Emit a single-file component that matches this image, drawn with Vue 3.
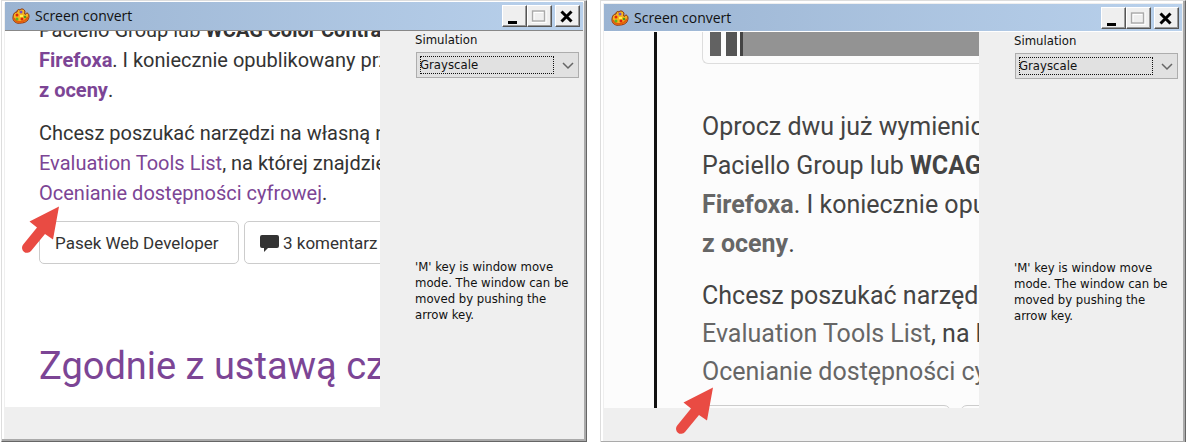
<script setup>
import { ref } from 'vue'

const windows = [
  { id: 'colour', gray: false },
  { id: 'gray', gray: true },
]
const modes = ref({ colour: 'Grayscale', gray: 'Grayscale' })
</script>

<template>
  <main class="desk">
    <section v-for="win in windows" :key="win.id" class="window" :class="win.id">
      <header class="titlebar">
        <svg class="palette" width="18" height="18" viewBox="0 0 18 18" aria-hidden="true">
          <path d="M8 3C6 2 5 3 5 5C2 5 1 8 1 11C1 15 5 17 9 16C14 16 17 13 17 9C17 6 14 5 14 7C13 8 12 7 13 5C13 2 9 1 8 3Z" fill="#f6b51f" stroke="#8b2a05" />
          <path d="M2 11Q3 15 8 15Q13 15 16 10" fill="none" stroke="#e45c0b" stroke-width="2" />
          <circle cx="9" cy="5" r="1.5" fill="#7b50b8" />
          <circle cx="5" cy="8" r="1.5" fill="#e0280c" />
          <circle cx="5" cy="12" r="1.5" fill="#62b51e" />
          <circle cx="10" cy="12" r="1.5" fill="#d9230f" />
          <circle cx="13" cy="10" r="1.3" fill="#4d9a20" />
          <path d="M8 8h3v2H8z" fill="#fff04b" />
        </svg>
        <h1 class="title">Screen convert</h1>
        <div class="controls">
          <button type="button" aria-label="Minimize">
            <svg width="22" height="20" viewBox="0 0 22 20"><path d="M5 15h9v3H5z" fill="#000" /></svg>
          </button>
          <button type="button" aria-label="Maximize" disabled>
            <svg width="22" height="20" viewBox="0 0 22 20"><path d="M5 5.5h12v10H5z" fill="none" stroke="#fff" stroke-width="3" /><path d="M4.500 5h12v10h-12z" fill="none" stroke="#aaa" stroke-width="1.500" /></svg>
          </button>
          <button type="button" class="close" aria-label="Close">
            <svg width="22" height="20" viewBox="0 0 22 20"><path d="M5.500 5.500L15.500 15.500M15.500 5.500L5.500 15.500" stroke="#000" stroke-width="3" /></svg>
          </button>
        </div>
      </header>

      <div class="body">
        <article v-if="!win.gray" class="page">
          <p>Paciello Group lub <b>WCAG Color Contrast</b><br /><a href="#"><b>Firefoxa</b></a>. I koniecznie opublikowany przez<br /><a href="#"><b>z oceny</b></a>.</p>
          <p>Chcesz poszukać narzędzi na własną rękę<br /><a href="#">Evaluation Tools List</a>, na której znajdziesz<br /><a href="#">Ocenianie dostępności cyfrowej</a>.</p>
          <div class="tags">
            <a href="#" class="tag wide">Pasek Web Developer</a>
            <a href="#" class="tag">
              <svg width="19" height="18" viewBox="0 0 19 18" aria-hidden="true"><path d="M2 1h15q2 0 2 2v9q0 2-2 2H8l-4 4v-4h-2q-2 0-2-2V3q0-2 2-2Z" fill="#333" /></svg>
              3 komentarz
            </a>
          </div>
          <h2><a href="#">Zgodnie z ustawą czy</a></h2>
        </article>

        <article v-else class="page">
          <div class="rule"></div>
          <div class="column">
            <div class="figure"><i class="bar"></i><i class="bar dark"></i><i class="fill"></i></div>
            <p class="intro">Oprocz dwu już wymienionych<br />Paciello Group lub <b>WCAG Color</b><br /><a href="#"><b>Firefoxa</b></a>. I koniecznie opublikowany<br /><a href="#"><b>z oceny</b></a>.</p>
            <p>Chcesz poszukać narzędzi na<br /><a href="#">Evaluation Tools List</a>, na której<br /><a href="#">Ocenianie dostępności cyfrowej</a>.</p>
            <div class="tags"><span class="tag first"></span><span class="tag"></span></div>
          </div>
        </article>

        <aside class="side">
          <label :for="'mode-' + win.id">Simulation</label>
          <div class="combo">
            <select :id="'mode-' + win.id" v-model="modes[win.id]">
              <option>Grayscale</option>
            </select>
            <svg class="chevron" width="12" height="8" viewBox="0 0 12 8" aria-hidden="true"><path d="M1 1l5 5l5-5" fill="none" stroke="#666" stroke-width="1.500" /></svg>
          </div>
          <p class="hint">'M' key is window move mode. The window can be moved by pushing the arrow key.</p>
        </aside>
      </div>

      <svg class="pointer" width="40" height="50" viewBox="0 0 40 50" aria-hidden="true">
        <path d="M39 1.500L9.500 16.500L17 22.500L3.200 39.500A5 5 0 0 0 11 46L25 29L33 34.500Z" fill="#e94b43" />
      </svg>
    </section>
  </main>
</template>

<style>
body { background: #fff; }
</style>

<style scoped>
* { box-sizing: border-box; }
.desk {
  display: grid;
  grid-template-columns: 1fr 1fr;
  gap: 13px;
  height: 100vh;
  min-height: 442px;
  padding: 0 10px 0 1px;
  overflow: hidden;
  background: #fff;
}
.window {
  position: relative;
  display: flex;
  flex-direction: column;
  min-width: 0;
  padding: 1px 3px 3px;
  border: 1px solid;
  border-color: #ddd #666 #666 #ddd;
  box-shadow: inset -2px -2px #aaa, inset 2px 2px #fff;
  background: #efefef;
}
.window.gray { margin-bottom: -2px; padding-top: 3px; }
.titlebar {
  display: flex;
  align-items: center;
  flex: none;
  height: 27px;
  padding: 0 3px 0 7px;
  background: linear-gradient(90deg, #9bb4d2, #b9d1ec);
}
.colour .titlebar { height: 28px; }
.title {
  flex: 1;
  margin: 0;
  padding-left: 5px;
  font: 14px/20px "Open Sans", "Noto Sans", sans-serif;
  color: #111;
}
.controls { display: flex; }
.controls button {
  width: 25px;
  height: 22px;
  padding: 0;
  border: 1px solid;
  border-color: #fff #555 #555 #fff;
  box-shadow: inset -1px -1px #999;
  background: #efefef;
}
.controls svg { display: block; }
.controls .close { margin-left: 3px; }
.body {
  display: flex;
  flex: none;
  height: 377px;
  border-top: 1px solid #fff;
  background: #efefef;
}
.colour .body { border-top-color: #888; }
.page {
  flex: 1;
  min-width: 0;
  overflow: hidden;
  white-space: nowrap;
  font-family: Roboto, sans-serif;
  color: #333;
}
.page p { margin: 0; }
.page a { color: #7c4595; text-decoration: none; }
.colour .page {
  padding-left: 34px;
  background: #fff;
  font-size: 20px;
  line-height: 30px;
}
.colour .page p { margin-bottom: 13px; }
.colour .page p:first-child { margin-top: -16px; }
.colour .tags { display: flex; gap: 5px; }
.colour .tag {
  display: flex;
  align-items: center;
  gap: 4px;
  flex: none;
  height: 43px;
  padding: 0 15px;
  border: 1px solid #ccc;
  border-radius: 5px;
  font-size: 18px;
  color: #333;
}
.colour .tag { font-size: 17px; }
.colour .wide { min-width: 200px; }
.page h2 { margin: 77px 0 0; font-size: 38px; line-height: 50px; font-weight: 400; }
.gray .page {
  display: flex;
  padding-left: 50px;
  background: #fcfcfc;
  font-size: 25px;
  line-height: 38px;
  color: #444;
}
.gray .page a { color: #666; }
.rule { flex: none; width: 3px; background: #111; }
.column { flex: 1; min-width: 0; padding-left: 45px; }
.figure {
  display: flex;
  height: 32px;
  padding: 0 0 7px 7px;
  border: 1px solid #ddd;
  border-width: 0 0 1px 1px;
  border-radius: 0 0 0 6px;
}
.bar { width: 11px; margin-right: 5px; background: #626262; }
.bar.dark { margin-right: 3px; background: #555; }
.fill { flex: 1; border-left: 3px solid #444; background: #939393; }
.gray .page .intro { margin: 43px 0 14px; line-height: 39px; }
.gray .tags { display: flex; gap: 9px; margin-top: 14px; }
.gray .tag { flex: none; width: 249px; height: 54px; border: 1px solid #ccc; border-radius: 7px; }
.side {
  flex: none;
  width: 203px;
  padding: 1px 4px 0 35px;
  font: 13px/16px "DejaVu Sans Condensed", "DejaVu Sans", sans-serif;
  color: #111;
}
.side label { display: block; }
.combo { position: relative; margin: 4px 0 0 1px; height: 26px; }
.combo select {
  appearance: none;
  width: 100%;
  height: 26px;
  padding: 0 24px 0 3px;
  border: 1px solid #adadad;
  border-radius: 0;
  outline: none;
  background: #e1e1e1;
  font: inherit;
  color: #111;
}
.combo::after {
  content: "";
  position: absolute;
  inset: 4px 25px 4px 4px;
  border: 1px dotted #111;
  pointer-events: none;
}
.chevron { position: absolute; right: 5px; top: 10px; pointer-events: none; }
.hint { margin: 181px 0 0; }
.pointer { position: absolute; left: 18px; top: 204px; }
.gray .pointer { left: 73px; top: 385px; }
</style>
